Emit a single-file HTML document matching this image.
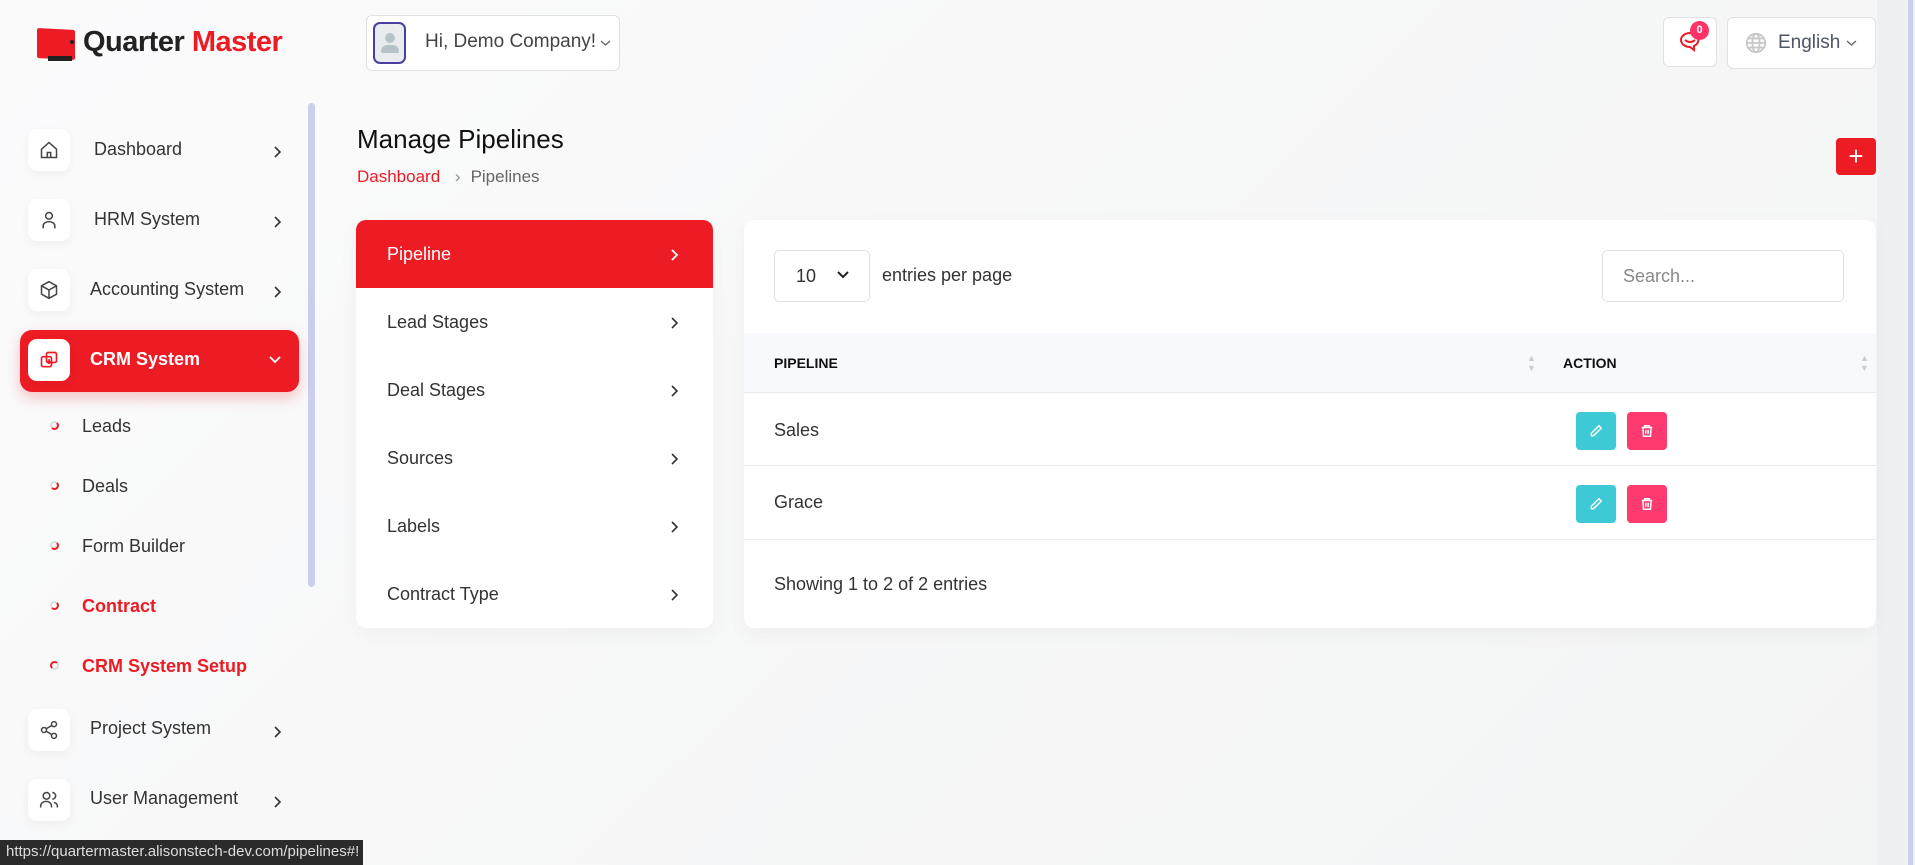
<!DOCTYPE html>
<html><head><meta charset="utf-8"><style>
*{box-sizing:border-box;margin:0;padding:0}
body{width:1915px;height:865px;overflow:hidden;font-family:"Liberation Sans",sans-serif;background:linear-gradient(135deg,#fbfbfc,#f3f4f4);position:relative;color:#2b2b2b}
.a{position:absolute}
.ib{position:absolute;left:28px;width:42px;height:42px;background:#fff;border-radius:9px;box-shadow:0 3px 10px rgba(0,0,0,.05);display:flex;align-items:center;justify-content:center}
.lbl{position:absolute;font-size:18px;color:#333}
.chev{position:absolute;left:272px}
.sub{position:absolute;left:82px;font-size:18px;color:#333}
.dot{position:absolute;left:50px;width:9px;height:9px;border-radius:50%;border:2px solid #ddd;border-right-color:#ed1c24;border-bottom-color:#ed1c24}
.mi{position:absolute;left:0;width:357px;height:68px;font-size:18px;color:#333;padding-left:31px;line-height:68px}
.mi svg{position:absolute;left:313px;top:28px}
.card{position:absolute;background:#fff;border-radius:10px;box-shadow:0 6px 20px rgba(0,0,0,.04)}
.btn{position:absolute;width:40px;height:38px;border-radius:4px;display:flex;align-items:center;justify-content:center}
</style></head><body>
<div class="a" style="left:1877px;top:0;width:38px;height:865px;background:#eef0f1"></div>
<div class="a" style="left:1908px;top:0;width:5px;height:865px;background:#c9d0ee"></div>
<!-- logo -->
<div class="a" style="left:37px;top:29px;width:38px;height:30px;background:#ed1c24;border-radius:2px;transform:skewY(3deg)"></div>
<div class="a" style="left:48px;top:56px;width:24px;height:5px;background:#222"></div>
<div class="a" style="left:70px;top:40px;width:4px;height:4px;background:#222;border-radius:50%"></div>
<div class="a" style="left:83px;top:26px;font-size:29px;font-weight:bold;color:#222;letter-spacing:-.5px">Quarter <span style="color:#ed1c24">Master</span></div>
<!-- user -->
<div class="a" style="left:366px;top:15px;width:254px;height:56px;border:1px solid #dfe1e6;border-radius:6px;background:#fff"></div>
<div class="a" style="left:373px;top:22px;width:33px;height:42px;border:2px solid #4a3fa0;border-radius:7px;background:#e8ecef">
<div class="a" style="left:10px;top:9px;width:10px;height:10px;border-radius:50%;background:#b5c3c8"></div>
<div class="a" style="left:6px;top:21px;width:18px;height:8px;border-radius:8px 8px 2px 2px;background:#b5c3c8"></div></div>
<div class="a" style="left:425px;top:31px;font-size:19px;color:#444">Hi, Demo Company!</div>
<svg class="a" style="left:600px;top:39px" width="11" height="8" viewBox="0 0 11 8" fill="none" stroke="#666" stroke-width="1.4"><path d="M1 2l4.5 4 4.5-4"/></svg>
<!-- notif -->
<div class="a" style="left:1663px;top:17px;width:54px;height:50px;border:1px solid #dfe1e6;border-radius:6px;background:#fff"></div>
<svg class="a" style="left:1678px;top:30px" width="24" height="24" viewBox="0 0 24 24" fill="none" stroke="#ed1c24" stroke-width="2"><path d="M12 3a9 7 0 1 0 0 14l4 3v-4a9 7 0 0 0-4-13z"/><path d="M7 10q5 4 10 0"/></svg>
<div class="a" style="left:1690px;top:21px;width:19px;height:19px;border-radius:50%;background:#ff3366;color:#fff;font-size:11px;font-weight:bold;text-align:center;line-height:19px">0</div>
<div class="a" style="left:1727px;top:17px;width:149px;height:52px;border:1px solid #dfe1e6;border-radius:6px;background:#fff"></div>
<svg class="a" style="left:1745px;top:32px" width="22" height="22" viewBox="0 0 24 24" fill="none" stroke="#c8c8c8" stroke-width="2"><circle cx="12" cy="12" r="10"/><ellipse cx="12" cy="12" rx="4" ry="10"/><path d="M2 12h20M4 7h16M4 17h16"/></svg>
<div class="a" style="left:1778px;top:32px;font-size:19px;color:#4d5566">English</div>
<svg class="a" style="left:1846px;top:39px" width="11" height="8" viewBox="0 0 11 8" fill="none" stroke="#666" stroke-width="1.4"><path d="M1 2l4.5 4 4.5-4"/></svg>
<!-- sidebar -->
<div class="a" style="left:308px;top:103px;width:7px;height:484px;background:#c9d0ee;border-radius:4px"></div>
<div class="ib" style="top:129px"><svg width="20" height="20" viewBox="0 0 24 24" fill="none" stroke="#444" stroke-width="1.8"><path d="M3 11l9-8 9 8v10H3z"/><path d="M10 21v-6h4v6"/></svg></div>
<div class="lbl" style="left:94px;top:139px">Dashboard</div><svg class="chev" style="top:145px" width="10" height="14" viewBox="0 0 10 14" fill="none" stroke="#333" stroke-width="1.6"><path d="M3 2l5 5-5 5"/></svg>
<div class="ib" style="top:199px"><svg width="20" height="20" viewBox="0 0 24 24" fill="none" stroke="#444" stroke-width="1.8"><circle cx="12" cy="7" r="4"/><path d="M5 22v-3a7 5 0 0 1 14 0v3"/></svg></div>
<div class="lbl" style="left:94px;top:209px">HRM System</div><svg class="chev" style="top:215px" width="10" height="14" viewBox="0 0 10 14" fill="none" stroke="#333" stroke-width="1.6"><path d="M3 2l5 5-5 5"/></svg>
<div class="ib" style="top:269px"><svg width="20" height="20" viewBox="0 0 24 24" fill="none" stroke="#444" stroke-width="1.8"><path d="M12 2l9 5v10l-9 5-9-5V7z"/><path d="M3 7l9 5 9-5M12 12v10"/></svg></div>
<div class="lbl" style="left:90px;top:279px">Accounting System</div><svg class="chev" style="top:285px" width="10" height="14" viewBox="0 0 10 14" fill="none" stroke="#333" stroke-width="1.6"><path d="M3 2l5 5-5 5"/></svg>
<div class="a" style="left:20px;top:330px;width:279px;height:62px;background:#ed1c24;border-radius:12px;box-shadow:0 6px 14px rgba(237,28,36,.25)"></div>
<div class="ib" style="top:339px;left:28px"><svg width="20" height="20" viewBox="0 0 24 24" fill="none" stroke="#ed1c24" stroke-width="2"><rect x="3" y="8" width="12" height="12" rx="2"/><rect x="9" y="3" width="12" height="12" rx="2"/><path d="M9 14h6M12 11v6"/></svg></div>
<div class="lbl" style="left:90px;top:349px;color:#fff;font-weight:bold">CRM System</div>
<svg class="a" style="left:268px;top:355px" width="14" height="10" viewBox="0 0 14 10" fill="none" stroke="#fff" stroke-width="1.8"><path d="M2 2l5 5 5-5"/></svg>
<div class="dot" style="top:421px"></div><div class="sub" style="top:416px">Leads</div>
<div class="dot" style="top:481px"></div><div class="sub" style="top:476px">Deals</div>
<div class="dot" style="top:541px"></div><div class="sub" style="top:536px">Form Builder</div>
<div class="dot" style="top:601px"></div><div class="sub" style="top:596px;color:#ed1c24;font-weight:bold">Contract</div>
<div class="dot" style="top:661px;border-color:#ddd;border-left-color:#ed1c24;border-top-color:#ed1c24"></div><div class="sub" style="top:656px;color:#ed1c24;font-weight:bold">CRM System Setup</div>
<div class="ib" style="top:709px"><svg width="20" height="20" viewBox="0 0 24 24" fill="none" stroke="#444" stroke-width="1.8"><circle cx="18" cy="5" r="3"/><circle cx="6" cy="12" r="3"/><circle cx="18" cy="19" r="3"/><path d="M8.6 13.5l6.8 4M15.4 6.5l-6.8 4"/></svg></div>
<div class="lbl" style="left:90px;top:718px">Project System</div><svg class="chev" style="top:725px" width="10" height="14" viewBox="0 0 10 14" fill="none" stroke="#333" stroke-width="1.6"><path d="M3 2l5 5-5 5"/></svg>
<div class="ib" style="top:779px"><svg width="20" height="20" viewBox="0 0 24 24" fill="none" stroke="#444" stroke-width="1.8"><circle cx="9" cy="7" r="4"/><path d="M2 21v-2a6 5 0 0 1 13 0v2M16 3a4 4 0 0 1 0 8M22 21v-2a5 4 0 0 0-4-4"/></svg></div>
<div class="lbl" style="left:90px;top:788px">User Management</div><svg class="chev" style="top:795px" width="10" height="14" viewBox="0 0 10 14" fill="none" stroke="#333" stroke-width="1.6"><path d="M3 2l5 5-5 5"/></svg>
<div class="a" style="left:0;top:840px;width:363px;height:25px;background:#2b2b2b;color:#ddd;font-size:15px;padding:3px 0 0 6px;white-space:nowrap;overflow:hidden">https://quartermaster.alisonstech-dev.com/pipelines#!</div>
<!-- header -->
<div class="a" style="left:357px;top:124px;font-size:26px;color:#111">Manage Pipelines</div>
<div class="a" style="left:357px;top:167px;font-size:17px;color:#ed1c24">Dashboard <span style="color:#888;margin:0 10px">&#8250;</span><span style="color:#666">Pipelines</span></div>
<div class="a" style="left:1836px;top:138px;width:40px;height:37px;background:#ed1c24;border-radius:4px;color:#fff;font-size:26px;text-align:center;line-height:36px">+</div>
<!-- left card -->
<div class="card" style="left:356px;top:220px;width:357px;height:408px;overflow:hidden">
<div class="mi" style="top:0;background:#ed1c24;color:#fff">Pipeline<svg width="10" height="14" viewBox="0 0 10 14" fill="none" stroke="#fff" stroke-width="1.8"><path d="M3 2l5 5-5 5"/></svg></div>
<div class="mi" style="top:68px">Lead Stages<svg width="10" height="14" viewBox="0 0 10 14" fill="none" stroke="#333" stroke-width="1.6"><path d="M3 2l5 5-5 5"/></svg></div>
<div class="mi" style="top:136px">Deal Stages<svg width="10" height="14" viewBox="0 0 10 14" fill="none" stroke="#333" stroke-width="1.6"><path d="M3 2l5 5-5 5"/></svg></div>
<div class="mi" style="top:204px">Sources<svg width="10" height="14" viewBox="0 0 10 14" fill="none" stroke="#333" stroke-width="1.6"><path d="M3 2l5 5-5 5"/></svg></div>
<div class="mi" style="top:272px">Labels<svg width="10" height="14" viewBox="0 0 10 14" fill="none" stroke="#333" stroke-width="1.6"><path d="M3 2l5 5-5 5"/></svg></div>
<div class="mi" style="top:340px">Contract Type<svg width="10" height="14" viewBox="0 0 10 14" fill="none" stroke="#333" stroke-width="1.6"><path d="M3 2l5 5-5 5"/></svg></div>
</div>
<!-- right card -->
<div class="card" style="left:744px;top:220px;width:1132px;height:408px">
<div class="a" style="left:30px;top:30px;width:96px;height:52px;border:1px solid #dfe1e6;border-radius:5px;font-size:18px;color:#333;padding:15px 0 0 21px">10</div>
<svg class="a" style="left:92px;top:50px" width="14" height="10" viewBox="0 0 14 10" fill="none" stroke="#222" stroke-width="2"><path d="M2 2l5 5 5-5"/></svg>
<div class="a" style="left:138px;top:45px;font-size:18px;color:#333">entries per page</div>
<div class="a" style="left:858px;top:30px;width:242px;height:52px;border:1px solid #dfe1e6;border-radius:5px;font-size:18px;color:#888;padding:15px 0 0 20px">Search...</div>
<div class="a" style="left:0;top:113px;width:1132px;height:60px;background:#f8f9fc;border-bottom:1px solid #e8e9ee"></div>
<div class="a" style="left:30px;top:135px;font-size:14px;font-weight:bold;color:#111">PIPELINE</div>
<div class="a" style="left:819px;top:135px;font-size:14px;font-weight:bold;color:#111">ACTION</div>
<div class="a" style="left:783px;top:133px;font-size:9px;color:#ccc;line-height:10px">&#9650;<br>&#9660;</div>
<div class="a" style="left:1116px;top:133px;font-size:9px;color:#ccc;line-height:10px">&#9650;<br>&#9660;</div>
<div class="a" style="left:30px;top:200px;font-size:18px;color:#333">Sales</div>
<div class="a" style="left:0;top:245px;width:1132px;height:1px;background:#e8e9ee"></div>
<div class="a" style="left:30px;top:272px;font-size:18px;color:#333">Grace</div>
<div class="a" style="left:0;top:319px;width:1132px;height:1px;background:#e8e9ee"></div>
<div class="a" style="left:30px;top:354px;font-size:18px;color:#333">Showing 1 to 2 of 2 entries</div>
</div>
<div class="btn" style="left:1576px;top:412px;background:#3ec9d6"><svg width="14" height="14" viewBox="0 0 24 24" fill="none" stroke="#fff" stroke-width="2.5"><path d="M17 3l4 4L8 20H4v-4z"/></svg></div>
<div class="btn" style="left:1627px;top:412px;background:#ff3a6e"><svg width="14" height="16" viewBox="0 0 24 24" fill="none" stroke="#fff" stroke-width="2.5"><path d="M3 6h18M8 6V3h8v3M5 6l1 15h12l1-15M10 10v7M14 10v7"/></svg></div>
<div class="btn" style="left:1576px;top:485px;background:#3ec9d6"><svg width="14" height="14" viewBox="0 0 24 24" fill="none" stroke="#fff" stroke-width="2.5"><path d="M17 3l4 4L8 20H4v-4z"/></svg></div>
<div class="btn" style="left:1627px;top:485px;background:#ff3a6e"><svg width="14" height="16" viewBox="0 0 24 24" fill="none" stroke="#fff" stroke-width="2.5"><path d="M3 6h18M8 6V3h8v3M5 6l1 15h12l1-15M10 10v7M14 10v7"/></svg></div>
</body></html>
